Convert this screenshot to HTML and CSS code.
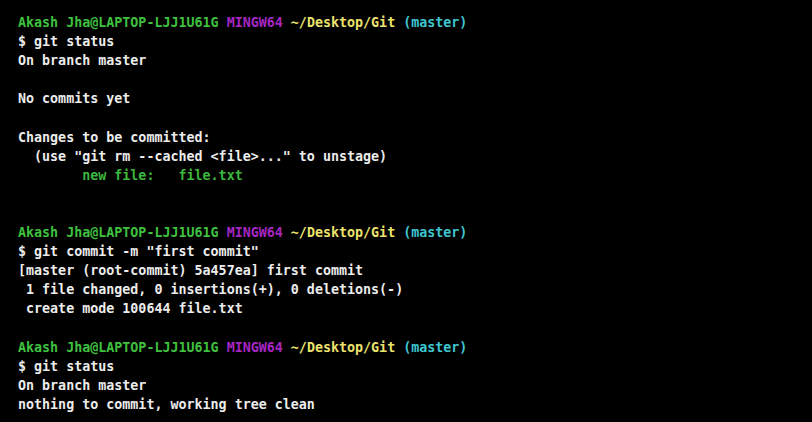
FILE: index.html
```html
<!DOCTYPE html>
<html>
<head>
<meta charset="utf-8">
<link rel="stylesheet" href="styles.css">
</head>
<body>
<pre class="term"><span class="g">Akash Jha@LAPTOP-LJJ1U61G</span> <span class="m">MINGW64</span> <span class="y">~/Desktop/Git</span> <span class="c">(master)</span>
$ git status
On branch master

No commits yet

Changes to be committed:
  (use "git rm --cached &lt;file&gt;..." to unstage)
<span class="g2">        new file:   file.txt</span>


<span class="g">Akash Jha@LAPTOP-LJJ1U61G</span> <span class="m">MINGW64</span> <span class="y">~/Desktop/Git</span> <span class="c">(master)</span>
$ git commit -m "first commit"
[master (root-commit) 5a457ea] first commit
 1 file changed, 0 insertions(+), 0 deletions(-)
 create mode 100644 file.txt

<span class="g">Akash Jha@LAPTOP-LJJ1U61G</span> <span class="m">MINGW64</span> <span class="y">~/Desktop/Git</span> <span class="c">(master)</span>
$ git status
On branch master
nothing to commit, working tree clean</pre>
</body>
</html>
```
FILE: styles.css
```css
html, body {
  margin: 0;
  padding: 0;
  background: #000;
  height: 100%;
}
.term {
  margin: 0;
  padding: 13px 0 0 18px;
  font-family: "DejaVu Sans Mono", "Liberation Mono", monospace;
  font-size: 13.33px;
  line-height: 19.1px;
  color: #ececec;
  font-weight: bold;
}
.g { color: #3fc13f; }
.g2 { color: #3cb83c; }
.m { color: #a626c4; }
.y { color: #ece36c; }
.c { color: #3ec6d0; }
```
